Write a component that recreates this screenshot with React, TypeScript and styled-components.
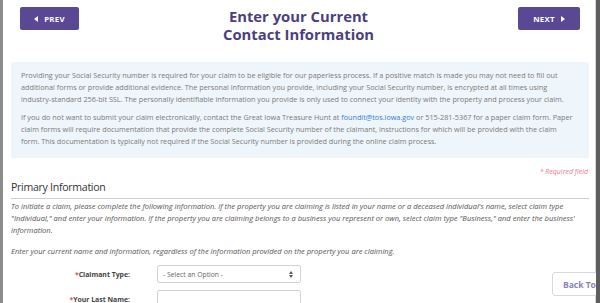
import React from 'react';
import styled, { createGlobalStyle } from 'styled-components';

const GlobalStyle = createGlobalStyle`
  html, body {
    margin: 0;
    padding: 0;
    background: #ffffff;
    font-family: "Open Sans", "DejaVu Sans", sans-serif;
    overflow: hidden;
  }
`;

const Frame = styled.div`
  box-sizing: border-box;
  width: 600px;
  height: 303px;
  border-left: 3px solid #8c8c8c;
  border-right: 4px solid #5e5e5e;
  position: relative;
  overflow: hidden;
`;

const Page = styled.div`
  box-sizing: border-box;
  height: 100%;
  border-right: 1px solid #d6d6d6;
  padding: 7px 6px 0 8px;
`;

const TopBar = styled.div`
  display: flex;
  align-items: flex-start;
  justify-content: space-between;
  padding: 0 9px;
`;

const NavButton = styled.button<{ $w: number }>`
  display: flex;
  align-items: center;
  justify-content: center;
  gap: 6px;
  width: ${p => p.$w}px;
  height: 23px;
  border: none;
  border-radius: 2px;
  background: #5b4894;
  color: #ffffff;
  font-family: "Open Sans", sans-serif;
  font-weight: 700;
  font-size: 7.8px;
  letter-spacing: 0.3px;
  padding: 0;
`;

const Title = styled.h1`
  margin: 0;
  text-align: center;
  font-size: 14.8px;
  line-height: 18px;
  font-weight: 700;
  color: #4b3f7f;
`;

const InfoBox = styled.div`
  margin-top: 19px;
  background: #eef5fb;
  border-radius: 2px;
  padding: 7px 16px 11px 10px;
`;

const InfoPara = styled.p`
  margin: 0 0 6px;
  font-size: 7.25px;
  line-height: 12px;
  color: #7a7a7a;
  &:last-child {
    margin-bottom: 0;
  }
`;

const Link = styled.span`
  color: #3a7bd5;
`;

const Required = styled.div`
  text-align: right;
  margin: 8px 1px 0 0;
  font-size: 7px;
  font-style: italic;
  color: #ec7b90;
  line-height: 12px;
`;

const Section = styled.div`
  margin-top: 1px;
`;

const Heading = styled.h2`
  margin: 0;
  font-size: 10.6px;
  letter-spacing: -0.3px;
  font-weight: 400;
  color: #333333;
  line-height: 16px;
  padding-bottom: 3px;
  border-bottom: 1px solid #cfcfcf;
`;

const Note = styled.p<{ $gap: number }>`
  margin: 1px 0 ${p => p.$gap}px;
  font-size: 7.55px;
  font-style: italic;
  line-height: 12px;
  color: #555555;
`;

const FieldRow = styled.div`
  display: grid;
  grid-template-columns: 119px 144px;
  column-gap: 27px;
  align-items: center;
  margin-bottom: 7px;
`;

const Label = styled.label`
  text-align: right;
  font-size: 6.9px;
  font-weight: 700;
  color: #444444;
`;

const Star = styled.span`
  color: #e0526e;
`;

const SelectBox = styled.div`
  box-sizing: border-box;
  height: 18px;
  border: 1px solid #d3d3d3;
  border-radius: 2px;
  display: flex;
  align-items: center;
  justify-content: space-between;
  padding: 0 7px 0 5px;
  font-size: 6.8px;
  color: #666666;
`;

const InputBox = styled.div`
  box-sizing: border-box;
  height: 18px;
  border: 1px solid #d3d3d3;
  border-radius: 2px;
`;

const BackToTop = styled.div`
  position: absolute;
  right: -22px;
  top: 272px;
  width: 66px;
  height: 24px;
  box-sizing: border-box;
  border: 1px solid #d8d8e0;
  border-radius: 3px;
  background: #ffffff;
  display: flex;
  align-items: center;
  padding-left: 10px;
  font-size: 8.5px;
  font-weight: 700;
  color: #8a83b6;
  white-space: nowrap;
`;

const Arrow = ({ dir }: { dir: 'left' | 'right' }) => (
  <svg width="4" height="6" viewBox="0 0 4 6">
    {dir === 'left' ? <path d="M4 0 L0 3 L4 6 Z" fill="#fff" /> : <path d="M0 0 L4 3 L0 6 Z" fill="#fff" />}
  </svg>
);

const SortIcon = () => (
  <svg width="4" height="7" viewBox="0 0 4 7">
    <path d="M0 3 L2 0 L4 3 Z M0 4 L2 7 L4 4 Z" fill="#555" />
  </svg>
);

export default function App() {
  return (
    <>
      <GlobalStyle />
      <Frame>
        <Page>
          <TopBar>
            <NavButton $w={59}>
              <Arrow dir="left" /> PREV
            </NavButton>
            <Title>
              Enter your Current
              <br />
              Contact Information
            </Title>
            <NavButton $w={62}>
              NEXT <Arrow dir="right" />
            </NavButton>
          </TopBar>

          <InfoBox>
            <InfoPara>
              Providing your Social Security number is required for your claim to be eligible for our paperless process. If a positive match is made you may not need to fill out additional forms or provide additional evidence. The personal information you provide, including your Social Security number, is encrypted at all times using industry-standard 256-bit SSL. The personally identifiable information you provide is only used to connect your identity with the property and process your claim.
            </InfoPara>
            <InfoPara>
              If you do not want to submit your claim electronically, contact the Great Iowa Treasure Hunt at <Link>foundit@tos.iowa.gov</Link> or 515-281-5367 for a paper claim form. Paper claim forms will require documentation that provide the complete Social Security number of the claimant, instructions for which will be provided with the claim form. This documentation is typically not required if the Social Security number is provided during the online claim process.
            </InfoPara>
          </InfoBox>

          <Required>* Required field</Required>

          <Section>
            <Heading>Primary Information</Heading>
            <Note $gap={9}>
              To initiate a claim, please complete the following information. If the property you are claiming is listed in your name or a deceased individual's name, select claim type "Individual," and enter your information. If the property you are claiming belongs to a business you represent or own, select claim type "Business," and enter the business' information.
            </Note>
            <Note $gap={8}>Enter your current name and information, regardless of the information provided on the property you are claiming.</Note>

            <FieldRow>
              <Label>
                <Star>*</Star>Claimant Type:
              </Label>
              <SelectBox>
                <span>- Select an Option -</span>
                <SortIcon />
              </SelectBox>
            </FieldRow>
            <FieldRow>
              <Label>
                <Star>*</Star>Your Last Name:
              </Label>
              <InputBox />
            </FieldRow>
          </Section>
        </Page>
        <BackToTop>Back To Top</BackToTop>
      </Frame>
    </>
  );
}
